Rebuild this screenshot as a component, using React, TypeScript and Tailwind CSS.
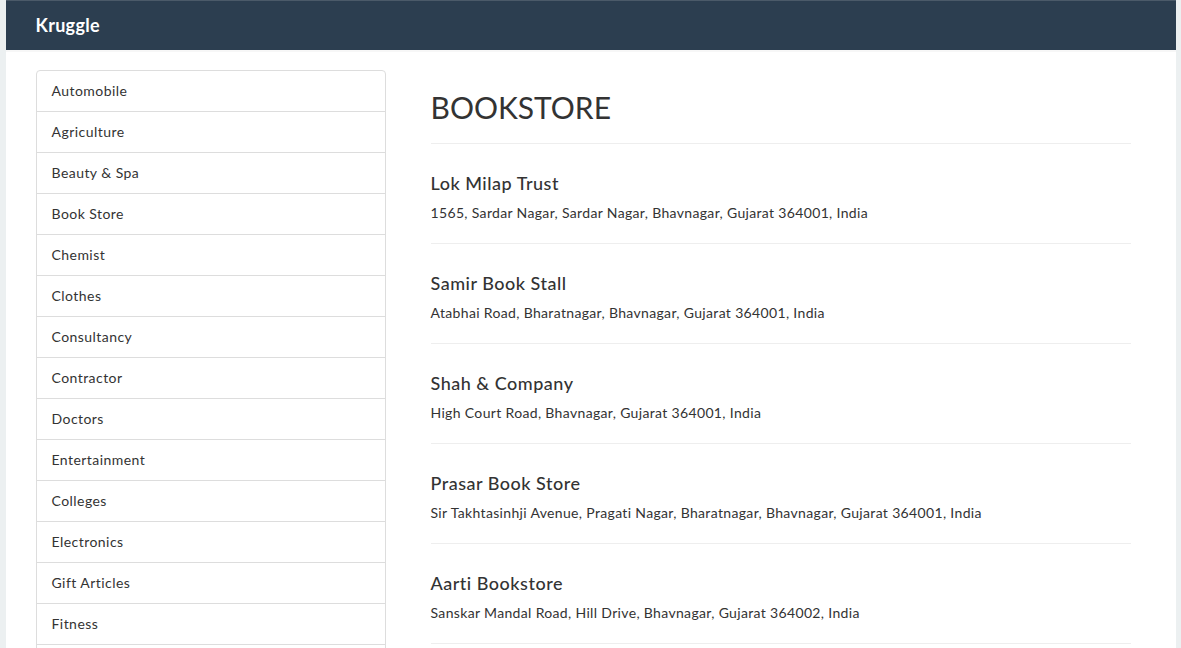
const CATEGORIES = [
  "Automobile",
  "Agriculture",
  "Beauty & Spa",
  "Book Store",
  "Chemist",
  "Clothes",
  "Consultancy",
  "Contractor",
  "Doctors",
  "Entertainment",
  "Colleges",
  "Electronics",
  "Gift Articles",
  "Fitness",
  "Furniture",
  "Hospitals",
];

const STORES = [
  { name: "Lok Milap Trust", address: "1565, Sardar Nagar, Sardar Nagar, Bhavnagar, Gujarat 364001, India" },
  { name: "Samir Book Stall", address: "Atabhai Road, Bharatnagar, Bhavnagar, Gujarat 364001, India" },
  { name: "Shah & Company", address: "High Court Road, Bhavnagar, Gujarat 364001, India" },
  { name: "Prasar Book Store", address: "Sir Takhtasinhji Avenue, Pragati Nagar, Bharatnagar, Bhavnagar, Gujarat 364001, India" },
  { name: "Aarti Bookstore", address: "Sanskar Mandal Road, Hill Drive, Bhavnagar, Gujarat 364002, India" },
];

export default function App() {
  return (
    <div className="min-h-screen bg-[#ecf0f1] font-['Lato','Liberation_Sans',sans-serif] text-[#333]">
      <div className="mx-auto w-[1170px] min-h-screen bg-white">
        {/* Navbar */}
        <nav className="h-[50px] bg-[#2c3e50] border-t border-[#4b5a69] flex items-center px-[30px]">
          <span className="text-white font-bold text-[18px] tracking-[0.3px]">Kruggle</span>
        </nav>
        <div className="h-[2px] bg-[#f7f7f7]" />

        <div className="flex px-[30px] pt-[18px]">
          {/* Sidebar */}
          <aside className="w-[350px] shrink-0">
            <ul className="border border-[#ddd] rounded-t-[4px]">
              {CATEGORIES.map((c, i) => (
                <li
                  key={c}
                  className={
                    "h-[41px] flex items-center px-[15px] pb-[2px] text-[14px] tracking-[0.45px] text-[#333] " +
                    (i === CATEGORIES.length - 1 ? "" : "border-b border-[#ddd]")
                  }
                >
                  {c}
                </li>
              ))}
            </ul>
          </aside>

          {/* Main */}
          <main className="ml-[45px] w-[700px]">
            <div className="pt-[17px] pb-[16px] border-b border-[#eee]">
              <h1 className="text-[30px] leading-[40px] font-normal text-[#333]">BOOKSTORE</h1>
            </div>
            {STORES.map((s) => (
              <div key={s.name} className="pt-[26px] pb-[20px] border-b border-[#eee]">
                <h4 className="text-[18px] leading-[26px] font-medium text-[#333] tracking-[0.5px]">{s.name}</h4>
                <p className="mt-[7px] text-[14px] leading-[20px] text-[#333] tracking-[0.34px]">{s.address}</p>
              </div>
            ))}
          </main>
        </div>
      </div>
    </div>
  );
}
